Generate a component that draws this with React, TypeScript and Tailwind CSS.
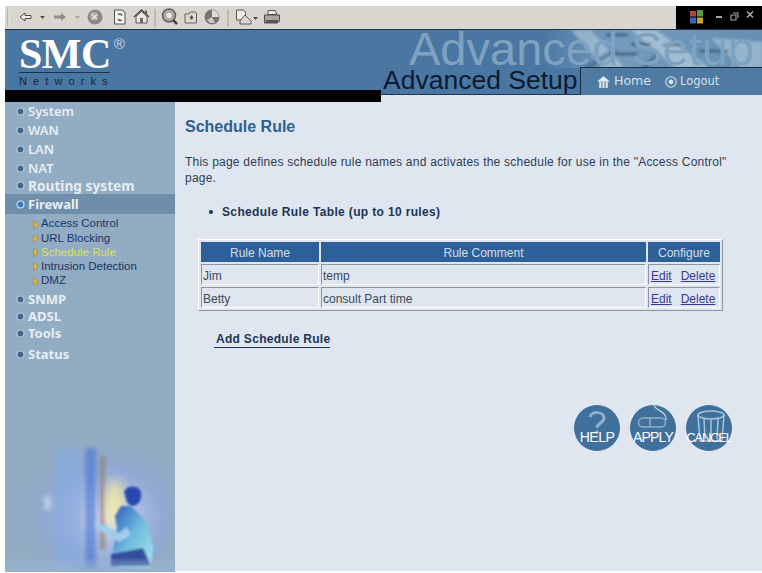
import React from 'react'

const navTop = [
  { name: 'System', cls: 'h-[19px] font-semibold text-[13px]' },
  { name: 'WAN', cls: 'h-[19px] font-semibold text-[13px]' },
  { name: 'LAN', cls: 'h-[19px] font-semibold text-[13px]' },
  { name: 'NAT', cls: 'h-[18px] font-semibold text-[13px]' },
  { name: 'Routing system', cls: 'h-[17px] font-bold text-[13.700px]' },
]
const navBottom = [
  { name: 'SNMP', cls: 'h-[18px] font-bold text-[13px]' },
  { name: 'ADSL', cls: 'h-[17px] font-bold text-[13px]' },
  { name: 'Tools', cls: 'h-[17px] font-bold text-[13px]' },
  { name: 'Status', cls: 'h-[18px] mt-[3px] font-bold text-[13px]' },
]
const subItems = ['Access Control', 'URL Blocking', 'Schedule Rule', 'Intrusion Detection', 'DMZ']
const rules = [
  { name: 'Jim', comment: 'temp' },
  { name: 'Betty', comment: 'consult Part time' },
]

function Dot({ active }: { active?: boolean }) {
  return (
    <svg width="9" height="9" viewBox="0 0 9 9" className="shrink-0">
      <circle cx="4.5" cy="4.5" r="4" fill={active ? '#cfe0ef' : '#bccbd8'} />
      <circle cx="4.5" cy="4.5" r="2.900" fill={active ? '#2f7fc8' : '#46658a'} />
    </svg>
  )
}

function NavItem({ name, cls }: { name: string; cls: string }) {
  return (
    <div className={`flex items-center gap-[3px] pl-[11px] leading-none text-[#e6edf3] ${cls}`}>
      <Dot />
      <span>{name}</span>
    </div>
  )
}

function ToolbarIcons() {
  return (
    <svg width="290" height="23" viewBox="0 0 290 23" className="shrink-0">
      <g transform="translate(-5 -6)">
        <path d="M8 9v18" stroke="#9a978f" strokeWidth="1" />
        <path d="M9 9v18" stroke="#f4f2ee" strokeWidth="1" />
        {/* back */}
        <path d="M20 17l5-4v2.5h6v3h-6V21z" fill="#f2f1ec" stroke="#4c4c48" strokeWidth="1" />
        <path d="M40 16h5l-2.5 3z" fill="#55554f" />
        {/* forward */}
        <path d="M66 17l-5-4v2.5h-7v3h7V21z" fill="#8f8d88" />
        <path d="M75 16h5l-2.5 3z" fill="#a5a39c" />
        {/* stop */}
        <circle cx="95" cy="17" r="7.5" fill="#8c8a86" />
        <circle cx="94" cy="16" r="4" fill="#b0aeaa" />
        <path d="M92 14.5l5 5M97 14.5l-5 5" stroke="#e6e4df" strokeWidth="1.3" />
        {/* refresh */}
        <path d="M114.500 10h8l2.500 3v11h-10.500z" fill="#f2f1ec" stroke="#55534e" />
        <path d="M118 14.500a3 3 0 0 1 4 1M122 20a3 3 0 0 1-4-1" fill="none" stroke="#45634b" strokeWidth="1.4" />
        {/* home */}
        <path d="M134 17l7.500-7 7.500 7" fill="none" stroke="#4b4a45" strokeWidth="1.500" />
        <path d="M136 16.500l5.500-5 5.500 5V23h-11z" fill="#e9e7e1" stroke="#5a5852" />
        <path d="M140 18h3v5h-3z" fill="#6c6a64" />
        <path d="M145 10.500h2v3.500h-2z" fill="#6a6862" />
        {/* search */}
        <path d="M155 9v18" stroke="#a09d95" />
        <circle cx="169" cy="15.500" r="6.500" fill="#a9a7a2" stroke="#65635f" strokeWidth="1.500" />
        <circle cx="169" cy="15.500" r="2.800" fill="#e8e7e3" />
        <path d="M173 20l4 4" stroke="#45443f" strokeWidth="2.500" />
        {/* favorites */}
        <path d="M185 14h4l1.500-2h5l1 2v9h-11.500z" fill="#dbd8d1" stroke="#66645e" />
        <path d="M191.500 15l2 2.500-2 2.500-2-2.500z" fill="#5e5c58" />
        {/* history */}
        <circle cx="212" cy="17" r="7.500" fill="#77756f" />
        <path d="M212 10a7 7 0 0 1 7 7h-7z" fill="#dddbd6" />
        <path d="M207 20l5-3 3 6h-5z" fill="#c9c7c1" />
        <path d="M228 9v18" stroke="#a09d95" />
        {/* mail */}
        <path d="M236.500 10h7l2 2v8h-9z" fill="#ecebe6" stroke="#5b5954" />
        <path d="M240 21l5-6 6 6v3h-11z" fill="#d7d5cf" stroke="#5b5954" />
        <path d="M253 17h5l-2.500 3z" fill="#4c4b46" />
        {/* print */}
        <path d="M268 10.500h7l2 4h-9z" fill="#eeede8" stroke="#55534e" />
        <path d="M264.500 15h15v6l-2 2h-13z" fill="#a8a6a0" stroke="#4b4a45" />
        <path d="M266 20h12v3h-12z" fill="#55534e" />
      </g>
    </svg>
  )
}

function WindowControls() {
  return (
    <svg width="86" height="23" viewBox="0 0 86 23">
      <g transform="translate(-676 -6)">
        <path d="M690 11h6v5.500h-6z" fill="#b3472f" />
        <path d="M697 10h6v6.500h-6z" fill="#5c9a3a" />
        <path d="M690 17.500h6v6h-6z" fill="#3c66b2" />
        <path d="M697 17.500h6v6h-6z" fill="#c9a52a" />
        <path d="M716 17h6" stroke="#b8b8b8" strokeWidth="1.800" />
        <path d="M733 13h5v5M731 15h5v5h-5z" fill="none" stroke="#a8a8a8" strokeWidth="1.100" />
        <path d="M747 11.500l6 6M753 11.500l-6 6" stroke="#b5b5b5" strokeWidth="1.400" />
      </g>
    </svg>
  )
}

function HeaderTexture() {
  return (
    <svg width="382" height="66" viewBox="0 0 382 66" className="absolute left-0 top-0">
      <defs>
        <linearGradient id="fade" x1="0" x2="1" y1="0" y2="0">
          <stop offset="0.42" stopColor="#9fc0d8" stopOpacity="0" />
          <stop offset="0.62" stopColor="#9fc0d8" stopOpacity="0.5" />
          <stop offset="1" stopColor="#8fb2cd" stopOpacity="0.4" />
        </linearGradient>
        <filter id="soft"><feGaussianBlur stdDeviation="1.800" /></filter>
      </defs>
      <rect width="382" height="38" fill="url(#fade)" />
      <g filter="url(#soft)">
        <path d="M190 0l32 38h22L210 0z" fill="#c3d8e6" opacity="0.5" />
        <path d="M250 0l45 38h34L275 0z" fill="#c9dce9" opacity="0.55" />
        <path d="M330 8l30 30h22V12z" fill="#bcd2e2" opacity="0.55" />
        <path d="M225 5h22M250 14h20M282 15h18M318 21h30M230 24h26" stroke="#2f526f" strokeWidth="2" />
        <path d="M205 38l30-18M262 38l16-14" stroke="#3b6487" strokeWidth="5" opacity="0.6" />
      </g>
    </svg>
  )
}

function Person() {
  return (
    <svg width="170" height="140" viewBox="0 0 170 140" className="block">
      <defs>
        <radialGradient id="halo" cx="0.55" cy="0.55" r="0.55">
          <stop offset="0" stopColor="#e8e6f2" />
          <stop offset="0.3" stopColor="#b0c0e6" />
          <stop offset="0.65" stopColor="#8fa8d8" stopOpacity="0.7" />
          <stop offset="1" stopColor="#92acc3" stopOpacity="0" />
        </radialGradient>
        <linearGradient id="coat" x1="0" x2="1" y1="0" y2="1">
          <stop offset="0" stopColor="#2f58bc" />
          <stop offset="0.5" stopColor="#6fbce0" />
          <stop offset="1" stopColor="#a7e6e6" />
        </linearGradient>
        <filter id="b1"><feGaussianBlur stdDeviation="6" /></filter>
        <filter id="b2"><feGaussianBlur stdDeviation="2.200" /></filter>
        <filter id="b3"><feGaussianBlur stdDeviation="1" /></filter>
      </defs>
      <ellipse cx="92" cy="78" rx="84" ry="72" fill="url(#halo)" />
      <g filter="url(#b2)">
        <rect x="50" y="16" width="27" height="118" fill="#86a8de" opacity="0.6" />
        <rect x="80" y="16" width="11" height="120" fill="#4d78d2" opacity="0.65" />
        <rect x="95" y="24" width="5" height="94" fill="#8d7f78" opacity="0.8" />
        <rect x="39" y="64" width="7" height="14" fill="#c4d4e6" opacity="0.8" />
      </g>
      <ellipse cx="110" cy="72" rx="10" ry="24" fill="#f2ea9c" opacity="0.85" filter="url(#b1)" />
      <g filter="url(#b3)">
        <path d="M119 60c2-6 12-8 16-2 3 5 1 12-4 15l-3 1c-4-1-7-4-7-8z" fill="#2a48b0" />
        <path d="M116 74l10 0 16 16 6 26-2 20h-32l-6-18 4-22-2-12z" fill="url(#coat)" />
        <path d="M92 90l22 11 8-6 4 8-12 7-24-15z" fill="#a0cce8" />
        <path d="M106 122l32-6 8 18h-40z" fill="#34509e" />
      </g>
      <rect x="0" y="128" width="170" height="12" fill="#9db5d8" opacity="0.4" filter="url(#b2)" />
    </svg>
  )
}

function RoundButton({ label, cls, children }: { label: string; cls: string; children: React.ReactNode }) {
  return (
    <div className="relative flex h-[46px] w-[46px] items-end justify-center rounded-full bg-[#40719d] pb-[7px]">
      <svg width="46" height="46" viewBox="0 0 46 46" className="absolute left-0 top-0">
        {children}
      </svg>
      <span className={`relative font-['Liberation_Sans',sans-serif] leading-none text-white ${cls}`}>{label}</span>
    </div>
  )
}

export default function App() {
  return (
    <div className="h-[573px] w-[762px] overflow-hidden bg-white pl-[5px] pt-[6px] font-['Liberation_Sans',sans-serif]">
      {/* browser toolbar */}
      <div className="flex h-[23px]">
        <div className="w-[671px] bg-[#d9d6d0]">
          <ToolbarIcons />
        </div>
        <div className="flex-1 bg-black">
          <WindowControls />
        </div>
      </div>

      {/* banner */}
      <div className="flex h-[73px] border-t border-[#1d3550]">
        <div className="flex w-[376px] flex-col">
          <div className="flex-1 bg-[#4a77a1] pl-[14px] pt-[8px]">
            <div className="flex w-[106px] items-start">
              <span className="font-['Liberation_Serif',serif] text-[42px] font-bold leading-[32px] tracking-[-0.5px] text-white">SMC</span>
              <span className="ml-[3px] mt-[-2px] font-['Liberation_Sans',sans-serif] text-[15px] leading-[15px] text-[#c9d8e6]">®</span>
            </div>
            <div className="mt-[2px] w-[91px] whitespace-nowrap border-t border-[#1b3350] pt-[1px] text-[11px] leading-[14px] tracking-[6.100px] text-[#16263c]">Networks</div>
          </div>
          <div className="h-[12px] bg-black" />
        </div>
        <div className="flex flex-1 flex-col bg-[#dfe6f0]">
          <div className="relative h-[65px] overflow-hidden bg-[#4a77a1]">
            <HeaderTexture />
            <div className="absolute left-[28px] top-0 whitespace-nowrap text-[47px] leading-[37px] text-[#7ea2c0]">Advanced Setup</div>
            <div className="absolute bottom-0 left-0 flex h-[28px] w-full items-end">
              <div className="h-[28px] w-[199px] whitespace-nowrap border-b border-[#22364e] pl-[2px] text-[26.500px] leading-[27px] text-[#0b1a33]">Advanced Setup</div>
              <div className="flex h-[28px] flex-1 items-center border-l border-t border-[#1c2c40] bg-[#4f7ba3] pl-[15px] font-['DejaVu_Sans',sans-serif] text-[12.500px] text-[#d5e0ea]">
                <svg width="15" height="15" viewBox="0 0 14 14" className="mr-[3px]">
                  <path d="M1 7l6-5 6 5H1z" fill="#e8eef3" />
                  <path d="M3 7h2v6H3zM6 7h2v6H6zM9 7h2v6H9z" fill="#dce6ee" />
                </svg>
                <span>Home</span>
                <svg width="12" height="12" viewBox="0 0 11 11" className="ml-[14px] mr-[3px]">
                  <circle cx="5.500" cy="5.500" r="4.800" fill="none" stroke="#d5e0ea" />
                  <circle cx="5.500" cy="5.500" r="2.200" fill="#d5e0ea" />
                </svg>
                <span className="text-[11.500px]">Logout</span>
              </div>
            </div>
          </div>
        </div>
      </div>

      {/* main */}
      <div className="flex h-[470px]">
        <aside className="flex w-[170px] flex-col justify-between bg-[#92acc3] font-['Noto_Sans',sans-serif]">
          <div>
            {navTop.map(item => (
              <NavItem key={item.name} name={item.name} cls={item.cls} />
            ))}
            <div className="flex h-[20px] items-center gap-[3px] bg-[#6f8ea9] pl-[11px] text-[13px] font-bold leading-none text-[#e9f0f5]">
              <Dot active />
              <span>Firewall</span>
            </div>
            <div className="mb-[2px] mt-[3px] pl-[28px] font-['Liberation_Sans',sans-serif] text-[11.500px]">
              {subItems.map(item => (
                <div key={item} className={`flex h-[14.250px] items-center gap-[2px] leading-none ${item === 'Schedule Rule' ? 'text-[#d9e65a]' : 'text-[#1a3568]'}`}>
                  <svg width="6" height="9" viewBox="0 0 6 9" className="shrink-0">
                    <path d="M.5.500l5 4-5 4z" fill="#e4b63a" stroke="#a8822a" strokeWidth=".6" />
                  </svg>
                  <span>{item}</span>
                </div>
              ))}
            </div>
            {navBottom.map(item => (
              <NavItem key={item.name} name={item.name} cls={item.cls} />
            ))}
          </div>
          <Person />
        </aside>

        <main className="h-[469px] flex-1 bg-[#dfe6f0] pl-[10px] text-[#2c3d52]">
          <h1 className="pt-[15px] text-[16px] font-bold leading-[20px] text-[#2f6090]">Schedule Rule</h1>
          <p className="mt-[17px] w-[545px] text-[12px] leading-[16px] tracking-[0.23px]">
            This page defines schedule rule names and activates the schedule for use in the "Access Control" page.
          </p>
          <div className="ml-[24px] mt-[18px] flex items-center gap-[9px] text-[12px] font-bold leading-[16px] tracking-[0.35px] text-[#1b3553]">
            <span className="h-[4px] w-[4px] rounded-full bg-[#1b3553]" />
            <span>Schedule Rule Table (up to 10 rules)</span>
          </div>

          <table className="ml-[13px] mt-[19px] w-[525px] table-fixed border-separate border-spacing-[2px] border border-b-[#8c949c] border-l-white border-r-[#8c949c] border-t-white bg-[#dfe6f0] text-[12px] leading-none">
            <thead>
              <tr className="h-[20px] bg-[#2d6098] text-[#d3deea]">
                <th className="w-[118px] pt-[1px] font-normal">Rule Name</th>
                <th className="pt-[1px] font-normal">Rule Comment</th>
                <th className="w-[72px] pt-[1px] font-normal">Configure</th>
              </tr>
            </thead>
            <tbody>
              {rules.map(rule => (
                <tr key={rule.name} className="h-[21px] text-[#3b4a5a]">
                  <td className="border border-b-white border-l-[#8f959c] border-r-white border-t-[#8f959c] px-[1px] pt-[2px]">{rule.name}</td>
                  <td className="border border-b-white border-l-[#8f959c] border-r-white border-t-[#8f959c] px-[1px] pt-[2px]">{rule.comment}</td>
                  <td className="border border-b-white border-l-[#8f959c] border-r-white border-t-[#8f959c] px-[2px] pt-[2px] text-[#37379a]">
                    <span className="underline">Edit</span>
                    <span className="ml-[9px] underline">Delete</span>
                  </td>
                </tr>
              ))}
            </tbody>
          </table>

          <div className="ml-[29px] mt-[21px] w-[116px] whitespace-nowrap border-b border-[#1b3553] pb-[1px] pl-[2px] text-[12px] font-bold leading-[14px] tracking-[0.3px] text-[#1b3553]">
            Add Schedule Rule
          </div>

          <div className="ml-[389px] mt-[57px] flex gap-[10px]">
            <RoundButton label="HELP" cls="text-[14px] tracking-[-0.5px]">
              <path d="M16 12c1-6 14-6 14 1 0 5-7 5-7 10" fill="none" stroke="#8fb0cc" strokeWidth="3" />
              <circle cx="23" cy="27" r="1.800" fill="#8fb0cc" />
            </RoundButton>
            <RoundButton label="APPLY" cls="text-[14px] tracking-[-0.8px]">
              <path d="M13 13h18a4 4 0 0 1 0 9H13a4 4 0 0 1 0-9zM20 13v9" fill="none" stroke="#8fb0cc" strokeWidth="1.500" />
              <path d="M24 0c1 6 13 6 12 15" fill="none" stroke="#cfdde8" strokeWidth="1.200" />
            </RoundButton>
            <RoundButton label="CANCEL" cls="text-[13px] tracking-[-1.200px]">
              <ellipse cx="25" cy="10" rx="13" ry="4" fill="none" stroke="#a8c2d6" strokeWidth="1.500" />
              <path d="M12 10l2 26h22l2-26M18 14l1 20M25 15v20M32 14l-1 20" fill="none" stroke="#a8c2d6" strokeWidth="1.500" />
            </RoundButton>
          </div>
        </main>
      </div>
    </div>
  )
}
